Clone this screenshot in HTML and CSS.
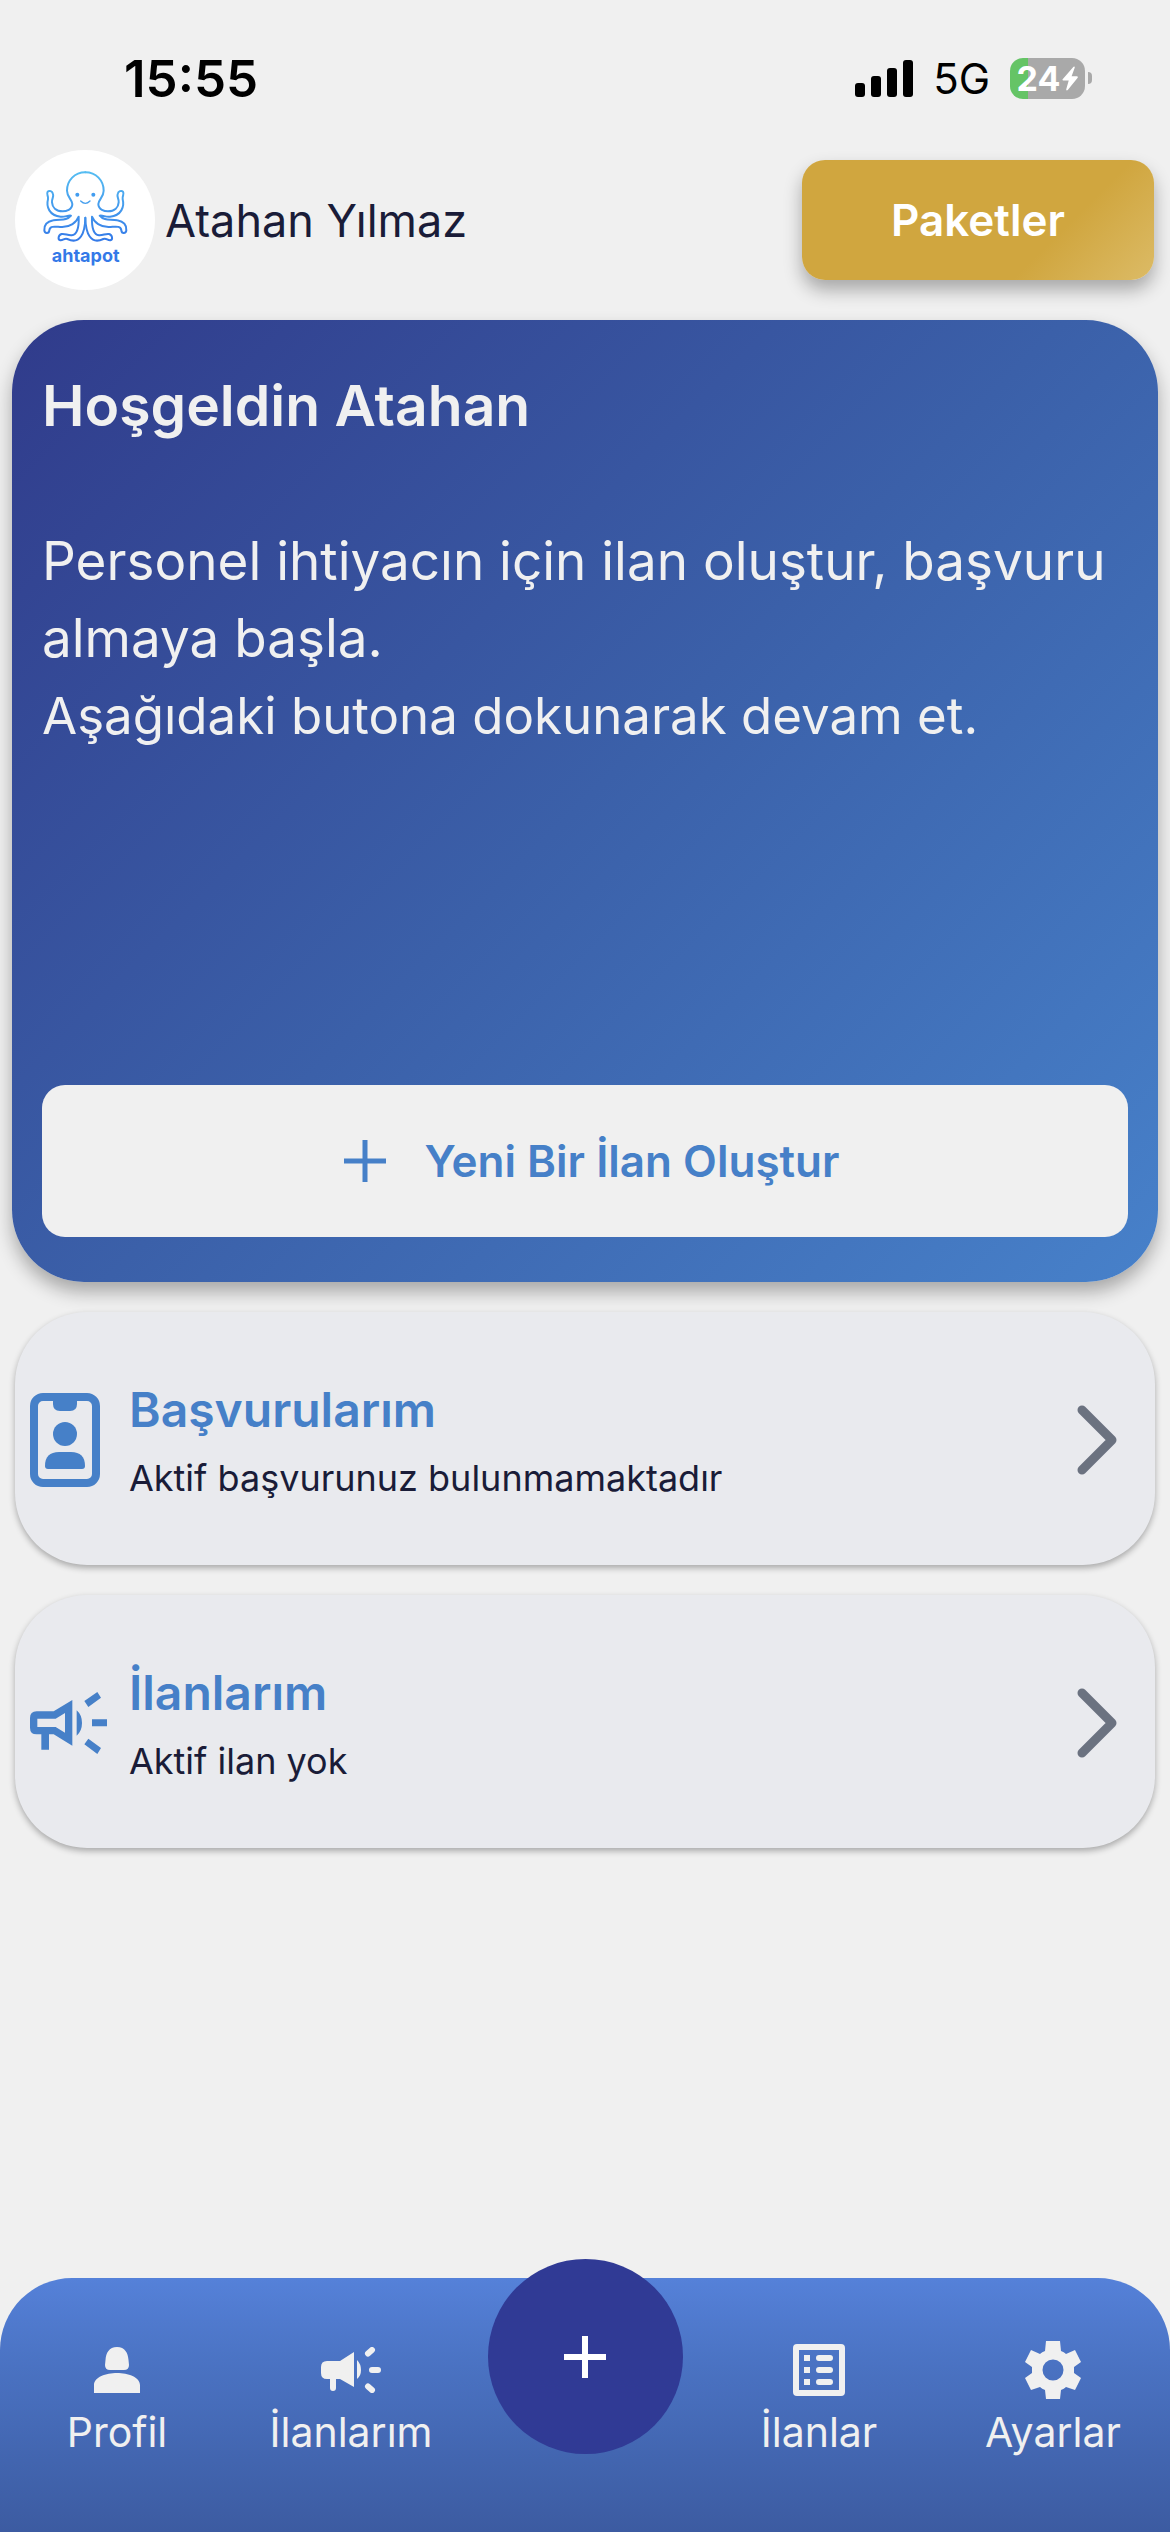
FILE: index.html
```html
<!DOCTYPE html>
<html lang="tr">
<head>
<meta charset="utf-8">
<meta name="viewport" content="width=device-width">
<title>Ahtapot</title>
<link rel="stylesheet" href="styles.css">
</head>
<body>
<div class="status">
  <span class="time">15:55</span>
  <div class="status-right">
    <svg class="signal" viewBox="0 0 174 111"><rect y="69" width="30" height="42" rx="9"/><rect x="48" y="48" width="30" height="63" rx="9"/><rect x="96" y="24" width="30" height="87" rx="9"/><rect x="144" width="30" height="111" rx="9"/></svg>
    <span class="network">5G</span>
    <div class="battery">
      <div class="battery-body">
        <span>24</span>
        <svg class="bolt" viewBox="0 0 50 76"><path d="M36 1 2 40Q0 44 4 44H21L13 72Q14 77 18 74L49 36Q51 31 46 31H30L40 4Q40-1 36 1Z" fill="#fff"/></svg>
      </div>
      <span class="battery-tip"></span>
    </div>
  </div>
</div>

<header class="header">
  <svg class="avatar" viewBox="-45 -45 420 420" role="img" aria-label="ahtapot">
    <defs>
      <linearGradient id="sea" gradientUnits="userSpaceOnUse" x1="0" y1="20" x2="0" y2="230"><stop offset="0" stop-color="#55bdf2"/><stop offset="1" stop-color="#3479e8"/></linearGradient>
    </defs>
    <circle cx="165" cy="165" r="210" fill="#fff"/>
    <g fill="none" stroke="url(#sea)" stroke-width="6" stroke-linejoin="round" stroke-linecap="round">
      <path id="half" d="M166 22C134 22 111 46 111 77C111 97 127 104 127 117C127 134 108 139 98 139C78 139 67 127 66 112C65 100 72 97 69 87C67 79 58 75 53 80C48 88 56 92 54 103C48 125 58 152 92 155C104 157 114 150 123 152C108 170 90 161 70 166C50 170 42 182 43 196C44 206 57 207 58 196C59 180 80 186 94 186C120 187 140 172 146 155C147 180 144 208 125 211C112 212 106 205 95 207C84 210 83 224 91 226C100 227 103 218 112 222C150 240 165 205 166 158"/>
      <use href="#half" transform="translate(332) scale(-1 1)"/>
      <path d="M152 108Q166 122 180 108" stroke-width="4"/>
    </g>
    <circle cx="142" cy="89" r="6" fill="#429df0"/><circle cx="190" cy="89" r="6" fill="#429df0"/>
    <text x="167" y="290" text-anchor="middle" class="avatar-name">ahtapot</text>
  </svg>
  <span class="user">Atahan Yılmaz</span>
  <button class="packages" type="button">Paketler</button>
</header>

<main>
  <section class="hero">
    <h1>Hoşgeldin Atahan</h1>
    <p class="lead">Personel ihtiyacın için ilan oluştur, başvuru almaya başla.</p>
    <p class="hint">Aşağıdaki butona dokunarak devam et.</p>
    <button class="create" type="button">
      <svg class="plus" viewBox="0 0 42 42"><path d="M21 0V42M0 21H42" stroke="currentColor" stroke-width="5"/></svg>
      <span>Yeni Bir İlan Oluştur</span>
    </button>
  </section>

  <a class="card" href="#basvurular">
    <span class="card-icon"><svg width="70" height="94" viewBox="0 0 70 94" fill="currentColor"><rect x="4" y="4" width="62" height="86" rx="9" fill="none" stroke="currentColor" stroke-width="8"/><path d="M23 6H47V11Q47 18 40 18H30Q23 18 23 11Z"/><circle cx="35" cy="41" r="12"/><path d="M15 73Q15 59 29 59H41Q55 59 55 73Q55 76 52 76H18Q15 76 15 73Z"/></svg></span>
    <span class="card-text"><strong>Başvurularım</strong><span>Aktif başvurunuz bulunmamaktadır</span></span>
    <svg class="chevron" viewBox="0 0 40 70"><path d="M5 5 35 35 5 65" fill="none" stroke="currentColor" stroke-width="9" stroke-linecap="round" stroke-linejoin="round"/></svg>
  </a>
  <a class="card" href="#ilanlarim">
    <span class="card-icon"><svg width="77" height="62" viewBox="87 335 231 186" fill="currentColor"><path fill-rule="evenodd" d="M107 393H158L214 359V496L158 462H144V508H121V462H107Q87 462 87 442V413Q87 393 107 393ZM109 415V440H164L192 457V398L164 415Z"/><path d="M227 390Q243 404 243 428Q243 452 227 466ZM250 362 289 335 300 352 262 380ZM273 417H318V438H273ZM262 475 300 503 289 521 250 492Z"/></svg></span>
    <span class="card-text"><strong>İlanlarım</strong><span>Aktif ilan yok</span></span>
    <svg class="chevron" viewBox="0 0 40 70"><path d="M5 5 35 35 5 65" fill="none" stroke="currentColor" stroke-width="9" stroke-linecap="round" stroke-linejoin="round"/></svg>
  </a>
</main>

<nav class="tabs">
  <a href="#profil">
    <span class="tab-icon"><svg width="46" height="46" viewBox="0 0 46 46" fill="currentColor"><path d="M23 0C31 0 34 6 34.500 13L35 18Q35 23 30 23H16Q11 23 11 18L11.500 13C12 6 15 0 23 0ZM0 46V38C0 30 12 26 23 26S46 30 46 38V46Z"/></svg></span>
    Profil
  </a>
  <a href="#ilanlarim">
    <span class="tab-icon"><svg width="60" height="46" viewBox="0 0 60 46" fill="currentColor"><path d="M6 14H19L33 5V40L19 32H15V41Q15 44 12 44T9 41V32H6Q0 32 0 26V20Q0 14 6 14ZM36 13Q40 17 40 23T36 32Z"/><path d="M47 6.500 51 3M51 23H57M47 39.500 51 43" stroke="currentColor" stroke-width="6" stroke-linecap="round"/></svg></span>
    İlanlarım
  </a>
  <button class="add" type="button" aria-label="Yeni ilan"><svg class="plus" viewBox="0 0 42 42"><path d="M21 0V42M0 21H42" stroke="currentColor" stroke-width="6"/></svg></button>
  <a href="#ilanlar">
    <span class="tab-icon"><svg width="52" height="52" viewBox="0 0 52 52" fill="currentColor"><rect x="3" y="3" width="46" height="46" rx="1" fill="none" stroke="currentColor" stroke-width="6" stroke-linejoin="round"/><path d="M11 11H17V17H11ZM11 23H17V29H11ZM11 35H17V41H11Z"/><path d="M26 14H37M26 26H37M26 38H37" stroke="currentColor" stroke-width="6" stroke-linecap="round"/></svg></span>
    İlanlar
  </a>
  <a href="#ayarlar">
    <span class="tab-icon"><svg width="56" height="58" viewBox="0 0 56 58" fill="currentColor"><path fill-rule="evenodd" d="M21 0H35L36 10Q39 11 41 13L50 9 56 21 49 26V32L56 37 50 49 41 46Q39 48 36 49L35 58H21L20 49Q17 48 15 46L6 49 0 37 7 32V26L0 21 6 9 15 13Q17 11 20 10ZM28 18.500A10.500 10.500 0 1 0 28 39.500A10.500 10.500 0 1 0 28 18.500Z"/></svg></span>
    Ayarlar
  </a>
</nav>
</body>
</html>
```
FILE: styles.css
```css
* { box-sizing: border-box; }

body {
  margin: 0;
  min-height: 100vh;
  display: flex;
  flex-direction: column;
  background: #f0f0f0;
  color: #1a1c38;
  font-family: Inter, "Liberation Sans", sans-serif;
}

h1, p { margin: 0; }
svg { display: block; flex: none; }
a { color: inherit; text-decoration: none; }
button { border: 0; padding: 0; font-family: inherit; cursor: pointer; }

.status {
  display: flex;
  justify-content: space-between;
  align-items: center;
  height: 150px;
  padding: 6px 78px 0 124px;
  color: #000;
}
.time { font-size: 51px; font-weight: 600; }
.status-right { display: flex; align-items: center; }
.signal { width: 58px; height: 37px; margin-right: 20px; }
.network { font-size: 42px; margin-right: 20px; }
.battery { display: flex; align-items: center; gap: 3px; }
.battery-body {
  display: flex;
  align-items: center;
  justify-content: center;
  gap: 2px;
  width: 75px;
  height: 41px;
  border-radius: 13px;
  background: linear-gradient(90deg, #65c466 24%, #a9a9a9 24%);
  color: #fff;
  font-size: 34px;
  font-weight: 700;
}
.bolt { width: 16px; height: 25px; }
.battery-tip { width: 4px; height: 12px; border-radius: 0 4px 4px 0; background: #a9a9a9; }

.header {
  display: flex;
  align-items: center;
  gap: 10px;
  padding: 0 16px 0 15px;
}
.avatar { width: 140px; height: 140px; }
.avatar-name { font-size: 54px; font-weight: 700; fill: #3479e8; }
.user { font-size: 45px; }
.packages {
  margin-left: auto;
  width: 352px;
  height: 120px;
  border-radius: 23px;
  background: linear-gradient(135deg, #d0a63f 70%, #dcbb66);
  box-shadow: 0 10px 18px rgba(0, 0, 0, 0.3);
  color: #fff;
  font-size: 44px;
  font-weight: 600;
}

main {
  display: flex;
  flex-direction: column;
  gap: 30px;
  padding: 30px 12px;
}

.hero {
  display: flex;
  flex-direction: column;
  padding: 48px 30px 45px;
  border-radius: 72px;
  background: linear-gradient(135deg, #303b8b, #3b60a9 50%, #4781ca);
  box-shadow: 0 10px 18px rgba(0, 0, 0, 0.3);
  color: #f0f0f0;
}
.hero h1 { margin-bottom: 79px; font-size: 57px; line-height: 76px; font-weight: 600; }
.lead { font-size: 53px; line-height: 77px; }
.hint { font-size: 51px; line-height: 77px; }
.create {
  display: flex;
  align-items: center;
  justify-content: center;
  gap: 38px;
  height: 152px;
  margin-top: 331px;
  padding-left: 14px;
  border-radius: 23px;
  background: #f0f0f0;
  color: #4680c8;
  font-size: 44px;
  font-weight: 600;
}
.plus { width: 42px; height: 42px; }

.card {
  display: flex;
  align-items: center;
  margin: 0 3px;
  padding: 66px 38px 63px 15px;
  border-radius: 72px;
  background: #e9eaee;
  box-shadow: 0 3px 6px rgba(0, 0, 0, 0.3);
}
.card-icon { width: 99px; color: #4680c8; }
.card-text {
  flex: 1;
  display: flex;
  flex-direction: column;
  gap: 12px;
  font-size: 36px;
  line-height: 48px;
}
.card-text strong { color: #4680c8; font-size: 48px; line-height: 64px; font-weight: 600; }
.chevron { width: 40px; height: 70px; color: #6b7280; }

.tabs {
  display: grid;
  grid-template-columns: repeat(5, 1fr);
  align-items: start;
  margin-top: auto;
  padding-bottom: 76px;
  border-radius: 72px 72px 0 0;
  background: linear-gradient(#5581d9, #4a72c2 35%, #3c5ba1);
  color: #f0f0f0;
  font-size: 41px;
  line-height: 48px;
}
.tabs a {
  display: flex;
  flex-direction: column;
  align-items: center;
  gap: 8px;
  padding-top: 62px;
}
.tab-icon { display: flex; align-items: center; height: 60px; }
.add {
  display: flex;
  align-items: center;
  justify-content: center;
  justify-self: center;
  width: 195px;
  height: 195px;
  margin-top: -19px;
  border-radius: 50%;
  background: #303a95;
  color: #fff;
}
```
